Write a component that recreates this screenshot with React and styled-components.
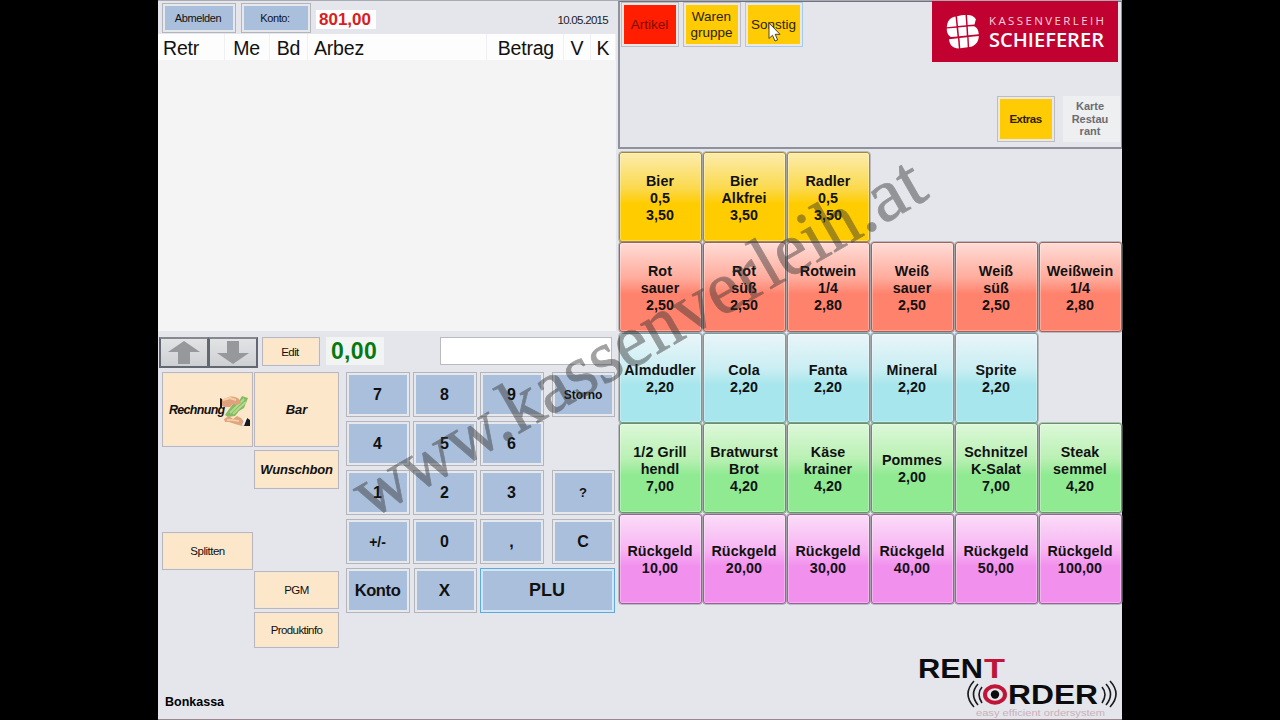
import styled, { createGlobalStyle } from 'styled-components';

const GlobalStyle = createGlobalStyle`
  * {
    box-sizing: border-box;
  }

  body {
    margin: 0;
    background: #000;
    font-family: 'Liberation Sans', Arial, sans-serif;
  }

  button {
    margin: 0;
    padding: 0;
    font-family: inherit;
    color: #111;
  }
`;

const Stage = styled.div`
  position: relative;
  display: flex;
  width: 1280px;
  height: 720px;
  padding-left: 158px;
  overflow: hidden;
  background: #000;
`;

const Screen = styled.main`
  display: grid;
  grid-template-columns: 460px 504px;
  width: 964px;
  height: 720px;
  background: #e4e6eb;
  border-top: 1px solid #a9abb3;
  border-bottom: 1px solid #9c8791;
`;

const Left = styled.section`
  display: flex;
  flex-direction: column;
  height: 718px;
`;

const TopBar = styled.div`
  display: flex;
  align-items: flex-start;
  height: 33px;
  padding: 2px 10px 0 4px;
`;

const BlueButton = styled.button`
  padding-right: 1px;
  border: 1px solid ${(p) => (p.$focus ? '#5fa9dc' : '#b3b5bd')};
  background: #a9bfdc;
  box-shadow: inset 0 0 0 2px ${(p) => (p.$focus ? '#d3e6f5' : '#e6e8ec')};
  font-size: ${(p) => p.$size || 17}px;
  font-weight: ${(p) => (p.$light ? 400 : 700)};
  letter-spacing: ${(p) => p.$track || 0}px;
`;

const BarButton = styled(BlueButton)`
  width: ${(p) => p.$width}px;
  height: 30px;
  margin-right: 5px;
  padding-right: 2px;
`;

const Account = styled.div`
  width: 60px;
  height: 19px;
  margin-top: 7px;
  background: #fff;
  color: #d8201c;
  font-size: 17px;
  font-weight: 700;
  line-height: 19px;
  text-align: center;
  text-indent: -2px;
`;

const DateLabel = styled.time`
  margin: 11px 0 0 auto;
  font-size: 11.5px;
  line-height: 13px;
  letter-spacing: -0.7px;
  color: #222;
`;

const HeadRow = styled.div`
  display: grid;
  grid-template-columns: 67px 45px 38px 179px 77px 27px 25px;
  width: 458px;
  height: 26px;
  background: #fdfdfd;
`;

const HeadCell = styled.div`
  padding: 0 ${(p) => (p.$align === 'right' ? 9 : 5)}px 0 5px;
  border-right: 1px solid #eef0f3;
  font-size: 19.5px;
  line-height: 28px;
  letter-spacing: -0.2px;
  text-align: ${(p) => p.$align || 'left'};
  text-indent: ${(p) => (p.$align ? 0 : p.$indent || 0)}px;
  color: #111;
`;

const Receipt = styled.div`
  width: 458px;
  height: 271px;
  background: #f4f4f5;
`;

const ToolRow = styled.div`
  display: flex;
  align-items: flex-start;
  height: 41px;
  padding: 6px 0 0 1px;
`;

const ArrowButton = styled.button`
  display: flex;
  align-items: center;
  justify-content: center;
  width: 50px;
  height: 31px;
  margin-right: ${(p) => (p.$last ? 4 : -1)}px;
  border: 2px solid #63676f;
  border-top-color: #85888f;
  background: linear-gradient(#e2e3e5, #cfd0d3);
`;

const CreamButton = styled.button`
  border: 1px solid #b9b6bd;
  background: #fde7ca;
  box-shadow: inset 0 0 0 1px #f4e6d6;
  font-size: ${(p) => (p.$strong ? 13 : 11.5)}px;
  font-weight: ${(p) => (p.$strong ? 700 : 400)};
  font-style: ${(p) => (p.$strong ? 'italic' : 'normal')};
  letter-spacing: ${(p) => p.$track || 0}px;
`;

const EditButton = styled(CreamButton)`
  width: 58px;
  height: 29px;
  padding-right: 2px;
`;

const Sum = styled.div`
  width: 58px;
  height: 28px;
  margin-left: 6px;
  background: #f2f4f4;
  color: #067a10;
  font-size: 23px;
  font-weight: 700;
  line-height: 29px;
  text-align: center;
  text-indent: -2px;
  letter-spacing: 0.3px;
`;

const Entry = styled.input`
  width: 172px;
  height: 28px;
  margin-left: 56px;
  border: 1px solid #b9bbc2;
  background: #fff;
`;

const Controls = styled.div`
  display: flex;
  align-items: flex-start;
  padding-left: 4px;
`;

const FunctionColumn = styled.div`
  display: grid;
  grid-template-rows: ${(p) => p.$rows};
  width: ${(p) => p.$width}px;
  margin-right: ${(p) => p.$gap}px;
`;

const PayButton = styled(CreamButton)`
  display: flex;
  align-items: center;
  padding-left: 6px;
  font-size: 12.5px;

  & > svg {
    flex: none;
    margin-left: -6px;
  }
`;

const Keypad = styled.div`
  display: grid;
  grid-template-rows: repeat(5, 45px);
  row-gap: 4px;
`;

const KeyRow = styled.div`
  display: grid;
  grid-template-columns: ${(p) => (p.$wide ? '64px 63px 135px' : '64px 64px 64px 2px 63px')};
  column-gap: ${(p) => (p.$wide ? '3.5px' : '3px')};
`;

const Mode = styled.footer`
  margin: auto 0 9px 7px;
  font-size: 12.5px;
  font-weight: 700;
  line-height: 15px;
`;

const Right = styled.section`
  display: flex;
  flex-direction: column;
  width: 504px;
  height: 718px;
`;

const Panel = styled.div`
  display: flex;
  flex-direction: column;
  justify-content: space-between;
  height: 148px;
  border: 2px solid #8f929c;
  border-top: 1px solid #70737e;
  border-right-width: 1px;
`;

const PanelRow = styled.div`
  display: flex;
  align-items: flex-start;
  justify-content: ${(p) => (p.$end ? 'flex-end' : 'flex-start')};
  gap: ${(p) => (p.$end ? 8 : 4)}px;
  padding: ${(p) => (p.$end ? '0 1px 5px 0' : '0 3px 0 1px')};
`;

const TabButton = styled.button`
  width: ${(p) => p.$width || 58}px;
  height: ${(p) => p.$height || 45}px;
  padding-right: 1px;
  border: 1px solid ${(p) => (p.$hover ? '#a5cbee' : '#bcbdc4')};
  background: ${(p) => p.$color};
  box-shadow: inset 0 0 0 2px #ebe8e4;
  color: ${(p) => p.$ink || '#2d2200'};
  font-size: ${(p) => p.$size || 13.5}px;
  font-weight: ${(p) => (p.$bold ? 700 : 400)};
  line-height: ${(p) => p.$line || 16}px;
  letter-spacing: ${(p) => p.$track || 0}px;
  white-space: pre-line;
`;

const CardLabel = styled(TabButton)`
  padding-right: 3px;
  border-color: #eeeff1;
  background: #eeeff1;
  box-shadow: none;
`;

const Brand = styled.div`
  width: 186px;
  height: 61px;
  margin: -1px 0 0 auto;
  background: #c10230;
  overflow: hidden;
`;

const Products = styled.div`
  display: grid;
  grid-template-columns: repeat(6, 84px);
  grid-template-rows: repeat(5, 90.4px);
  margin: 3px 0 0 1px;
`;

const tones = {
  beer: ['#fcecac', '#fbd94e', '#ffcc00', '#a38a30'],
  wine: ['#ffdcd6', '#ffab9c', '#ff826c', '#a0625a'],
  soft: ['#e9f5f9', '#c9eef3', '#a6e6ec', '#6f9ea5'],
  food: ['#dcf8d8', '#b9f0b3', '#90ea92', '#5d9a5d'],
  cash: ['#fbdcf8', '#f7b4f3', '#f290ee', '#9c619b'],
};

const Product = styled.button`
  grid-column: ${(p) => p.$column};
  grid-row: ${(p) => p.$row};
  width: 83px;
  height: 90px;
  padding: 2px 1px 0 0;
  border: 1px solid ${(p) => tones[p.$tone][3]};
  border-radius: 3px;
  background: linear-gradient(
    ${(p) => tones[p.$tone][0]},
    ${(p) => tones[p.$tone][1]} 40%,
    ${(p) => tones[p.$tone][2]} 58%,
    ${(p) => tones[p.$tone][2]}
  );
  box-shadow: inset 0 0 0 1px rgba(255, 255, 255, 0.3), 0 0 0 0.5px #8d8f92;
  font-size: 14.3px;
  font-weight: 700;
  line-height: 17px;
  letter-spacing: 0.1px;
  white-space: pre;
`;

const RentLogo = styled.svg`
  display: block;
  margin: auto 3px 0 auto;
`;

const Overlay = styled.svg`
  position: absolute;
  top: 0;
  left: 0;
  pointer-events: none;
`;

const columns = [
  ['Retr'],
  ['Me', 'right'],
  ['Bd', 'center'],
  ['Arbez'],
  ['Betrag', 'right'],
  ['V', 'center'],
  ['K', 'center'],
];

const keys = [
  ['7', '8', '9', '', 'Storno'],
  ['4', '5', '6'],
  ['1', '2', '3', '', '?'],
  ['+/-', '0', ',', '', 'C'],
];

const products = [
  ['beer', ['Bier\n0,5\n3,50', 'Bier\nAlkfrei\n3,50', 'Radler\n0,5\n3,50']],
  [
    'wine',
    [
      'Rot\nsauer\n2,50',
      'Rot\nsüß\n2,50',
      'Rotwein\n1/4\n2,80',
      'Weiß\nsauer\n2,50',
      'Weiß\nsüß\n2,50',
      'Weißwein\n1/4\n2,80',
    ],
  ],
  ['soft', ['Almdudler\n2,20', 'Cola\n2,20', 'Fanta\n2,20', 'Mineral\n2,20', 'Sprite\n2,20']],
  [
    'food',
    [
      '1/2 Grill\nhendl\n7,00',
      'Bratwurst\nBrot\n4,20',
      'Käse\nkrainer\n4,20',
      'Pommes\n2,00',
      'Schnitzel\nK-Salat\n7,00',
      'Steak\nsemmel\n4,20',
    ],
  ],
  [
    'cash',
    ['10,00', '20,00', '30,00', '40,00', '50,00', '100,00'].map((v) => `Rückgeld\n${v}`),
  ],
];

const keySize = (key) => {
  if (key === 'Storno') return 12;
  if (key === '?') return 13;
  return key === '+/-' ? 14 : 16;
};

const Arrow = ({ down }) => (
  <svg width="34" height="25" viewBox="0 0 34 25">
    <path
      d="M17 1L33 12H23V24H11V12H1Z"
      fill="#97989b"
      transform={down ? 'rotate(180 17 12.5)' : undefined}
    />
  </svg>
);

const MoneyIcon = () => (
  <svg width="32" height="34" viewBox="0 0 32 34">
    <path d="M8 19L14 11L20 8L23 3L29 5L27 10L25 15L20 18L16 23L9 24L6 22Z" fill="#85bb62" />
    <path d="M11 20L17 14L25 6M14 21L20 15L27 9" stroke="#b6da90" strokeWidth="1.8" fill="none" />
    <path d="M2 7L10 4C14 3 17 4 20 6L22 10L18 12L14 11L11 14L5 14L2 12Z" fill="#dfa27a" />
    <path d="M4 7L11 5L17 7" stroke="#f5cfaa" strokeWidth="2" fill="none" />
    <path d="M5 26L10 23L14 26L18 23L22 25L26 30L23 33L16 31L10 29L6 29Z" fill="#e0a67c" />
    <path d="M8 27L13 27L20 28" stroke="#f6d3b2" strokeWidth="1.5" fill="none" />
    <path d="M1 5V16L3 14V6Z" fill="#1d1718" />
    <path d="M28 25L31 27V33H24Z" fill="#17191f" />
    <path d="M26 25L28 25L25 33L23 32Z" fill="#f5f5f5" />
  </svg>
);

const SchiefererLogo = () => (
  <svg width="187" height="61" viewBox="0 0 187 61">
    <g fill="#fff">
      <path d="M23.500 15.500L24.500 25.300L14.800 26.200C15 20.500 18 16.500 23.500 15.500Z" />
      <path d="M25 15.200C28 14.500 31 14 33.500 14L34.200 24.200L26 25.100Z" />
      <path d="M35 14C39 14 42.500 15.200 43.800 18.500L42.500 23.400L35.700 24Z" />
      <path d="M14.800 27.600L24.600 26.700L25.500 35.500L19 36C16.500 35 14.600 32 14.800 27.600Z" />
      <path d="M26.200 26.500L34.300 25.700L34.800 34.400L27 35.300Z" />
      <path d="M35.800 25.600L41.500 25.200C45 25.800 46.500 29 46.700 33.200L36.300 34.200Z" />
      <path d="M17 38.200L26 37.200L26.800 47.400C21 47.500 17.500 44 17 38.200Z" />
      <path d="M27.500 37L35.200 36.200L35.700 46.300L28.300 47.300Z" />
      <path d="M36.600 36L46.800 34.900C46.700 41 43 45.200 37.100 46.100Z" />
    </g>
    <g fill="#fff" fontFamily="'Open Sans', sans-serif">
      <text x="57" y="23.5" fontSize="11.5" textLength="115" fill="#f6d4dc">
        KASSENVERLEIH
      </text>
      <text x="57" y="46" fontSize="19.5" fontWeight="600" textLength="115" lengthAdjust="spacingAndGlyphs">
        SCHIEFERER
      </text>
    </g>
  </svg>
);

const RentOrder = () => (
  <RentLogo width="202" height="66" viewBox="0 0 202 66">
    <g fontWeight="700" fontSize="27.5" fill="#0c0c0e">
      <text x="1" y="25" textLength="65" lengthAdjust="spacingAndGlyphs">
        REN
      </text>
      <text x="67" y="25" textLength="21" lengthAdjust="spacingAndGlyphs" fill="#c01537">
        T
      </text>
      <text x="91" y="51" textLength="90" lengthAdjust="spacingAndGlyphs">
        RDER
      </text>
    </g>
    <ellipse cx="78" cy="41.5" rx="10" ry="8.2" fill="none" stroke="#c01537" strokeWidth="4" />
    <circle cx="78" cy="41.5" r="4.2" fill="#0c0c0e" />
    <path
      d="M57 28Q45 41 57 54M61 31Q52 41 61 52M65 34Q59 41 65 50M185 34Q191 41 185 50M189 31Q198 41 189 52M193 28Q205 41 193 54"
      fill="none"
      stroke="#1a1a1e"
      strokeWidth="1.6"
    />
    <text x="59" y="63" fontSize="9.5" fill="#cbafba" textLength="129" lengthAdjust="spacingAndGlyphs">
      easy efficient ordersystem
    </text>
  </RentLogo>
);

export default function App() {
  return (
    <Stage>
      <GlobalStyle />
      <Screen>
        <Left>
          <TopBar>
            <BarButton $width={74} $size={11} $track={-0.4} $light>
              Abmelden
            </BarButton>
            <BarButton $width={70} $size={11} $track={-0.4} $light>
              Konto:
            </BarButton>
            <Account>801,00</Account>
            <DateLabel>10.05.2015</DateLabel>
          </TopBar>
          <HeadRow>
            {columns.map(([title, align]) => (
              <HeadCell key={title} $align={align} $indent={title === 'Arbez' ? 1 : 0}>
                {title}
              </HeadCell>
            ))}
          </HeadRow>
          <Receipt />
          <ToolRow>
            <ArrowButton>
              <Arrow />
            </ArrowButton>
            <ArrowButton $last>
              <Arrow down />
            </ArrowButton>
            <EditButton $track={-0.6}>Edit</EditButton>
            <Sum>0,00</Sum>
            <Entry />
          </ToolRow>
          <Controls>
            <FunctionColumn $rows="75px 85px 38px" $width={91} $gap={1}>
              <PayButton $strong $track={-0.7}>
                Rechnung
                <MoneyIcon />
              </PayButton>
              <span />
              <CreamButton $track={-0.5}>Splitten</CreamButton>
            </FunctionColumn>
            <FunctionColumn $rows="75px 3px 39px 82px 38px 3px 36px" $width={85} $gap={7}>
              <CreamButton $strong>Bar</CreamButton>
              <span />
              <CreamButton $strong $track={-0.2}>
                Wunschbon
              </CreamButton>
              <span />
              <CreamButton $track={-0.6}>PGM</CreamButton>
              <span />
              <CreamButton $track={-0.6}>Produktinfo</CreamButton>
            </FunctionColumn>
            <Keypad>
              {keys.map((row) => (
                <KeyRow key={row[0]}>
                  {row.map((key, i) =>
                    key ? (
                      <BlueButton key={key} $size={keySize(key)}>
                        {key}
                      </BlueButton>
                    ) : (
                      <span key={i} />
                    )
                  )}
                </KeyRow>
              ))}
              <KeyRow $wide>
                <BlueButton $size={16.5} $track={-0.4}>
                  Konto
                </BlueButton>
                <BlueButton>X</BlueButton>
                <BlueButton $size={18} $focus>
                  PLU
                </BlueButton>
              </KeyRow>
            </Keypad>
          </Controls>
          <Mode>Bonkassa</Mode>
        </Left>
        <Right>
          <Panel>
            <PanelRow>
              <TabButton $color="#ff1e00" $ink="#7c0d00">
                Artikel
              </TabButton>
              <TabButton $color="#ffcb05">{'Waren\ngruppe'}</TabButton>
              <TabButton $color="#ffcb05" $hover>
                Sonstig
              </TabButton>
              <Brand>
                <SchiefererLogo />
              </Brand>
            </PanelRow>
            <PanelRow $end>
              <TabButton $color="#ffcb05" $bold $size={11.5} $height={46} $track={-0.5}>
                Extras
              </TabButton>
              <CardLabel $bold $size={11} $line={12.5} $width={57} $height={46} $ink="#6b6c70">
                {'Karte\nRestau\nrant'}
              </CardLabel>
            </PanelRow>
          </Panel>
          <Products>
            {products.map(([tone, items], row) =>
              items.map((text, column) => (
                <Product key={text} $tone={tone} $row={row + 1} $column={column + 1}>
                  {text}
                </Product>
              ))
            )}
          </Products>
          <RentOrder />
        </Right>
      </Screen>
      <Overlay width="1280" height="720" viewBox="0 0 1280 720">
        <text
          transform="translate(370 519.5) rotate(-29.9)"
          fontFamily="'Liberation Serif', serif"
          fontSize="75"
          fill="#333"
          stroke="#333"
          strokeWidth="0.8"
          opacity="0.45"
        >
          <tspan x="0" y="0" textLength="170" lengthAdjust="spacingAndGlyphs">
            www.
          </tspan>
          <tspan x="170" y="0" textLength="420" lengthAdjust="spacingAndGlyphs">
            kassenverleih.
          </tspan>
          <tspan x="591" y="0" textLength="56" lengthAdjust="spacingAndGlyphs">
            at
          </tspan>
        </text>
        <path
          d="M769 23V38.500L772.500 35.300L775 41L777.600 39.900L775.200 34.300H780Z"
          fill="#fff"
          stroke="#333"
          strokeWidth="0.9"
        />
      </Overlay>
    </Stage>
  );
}
